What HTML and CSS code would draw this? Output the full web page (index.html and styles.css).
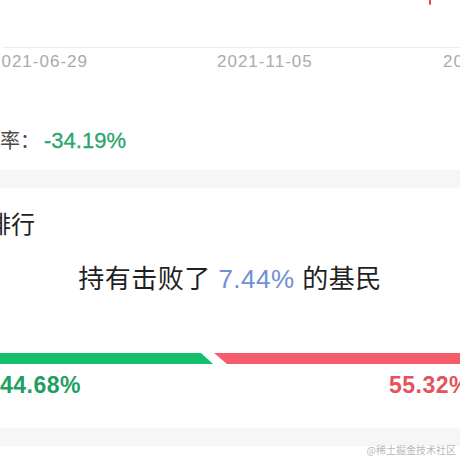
FILE: index.html
```html
<!DOCTYPE html>
<html lang="zh-CN">
<head>
<meta charset="utf-8">
<title>持有排行</title>
<link rel="stylesheet" href="styles.css">
</head>
<body>
<div class="page">
  <div class="chart">
    <span class="chart-mark"></span>
  </div>
  <div class="axis">
    <span class="date">2021-06-29</span>
    <span class="date">2021-11-05</span>
    <span class="date">2022-03-14</span>
  </div>
  <div class="yield">
    <span class="yield-label">收益率：</span><span class="yield-value">-34.19%</span>
  </div>
  <div class="band"></div>
  <div class="rank">
    <div class="rank-title">持有排行</div>
    <div class="rank-sentence">持有击败了 <span class="rank-pct">7.44%</span> 的基民</div>
    <div class="bars">
      <div class="bar bar-win"></div>
      <div class="bar bar-lose"></div>
    </div>
    <div class="pcts">
      <span class="pct pct-win">44.68%</span>
      <span class="pct pct-lose">55.32%</span>
    </div>
  </div>
  <div class="band"></div>
</div>
<div class="watermark">@稀土掘金技术社区</div>
</body>
</html>
```

FILE: styles.css
```css
html, body {
  margin: 0;
  padding: 0;
  background: #ffffff;
}
body {
  width: 460px;
  height: 460px;
  overflow: hidden;
  position: relative;
  font-family: "Liberation Sans", "Noto Sans CJK SC", sans-serif;
  color: #222222;
}
.page {
  width: 460px;
  overflow: hidden;
}
.chart {
  position: relative;
  height: 47px;
  margin-left: 3px;
  border-bottom: 1px solid #ececec;
}
.chart-mark {
  position: absolute;
  left: 426px;
  top: 0;
  width: 2px;
  height: 5px;
  background: #e8454f;
  border-radius: 0 0 1px 1px;
}
.axis {
  display: grid;
  grid-template-columns: repeat(3, 226px);
  margin-left: -9px;
  height: 26px;
  line-height: 27px;
  font-size: 17px;
  letter-spacing: 1px;
  color: #ababab;
  white-space: nowrap;
}
.yield {
  padding-top: 53px;
  padding-bottom: 15px;
  height: 28px;
  line-height: 28px;
  margin-left: -40px;
  white-space: nowrap;
}
.yield-label {
  font-size: 20px;
  color: #4a4a4a;
}
.yield-value {
  margin-left: 4px;
  font-size: 22px;
  color: #2aa56c;
  -webkit-text-stroke: 0.3px #2aa56c;
}
.band {
  height: 18px;
  background: #f6f6f6;
}
.rank {
  padding-top: 21px;
  padding-bottom: 29px;
}
.rank-title {
  margin-left: -61px;
  height: 32px;
  line-height: 32px;
  font-size: 24px;
  color: #222222;
  white-space: nowrap;
}
.rank-sentence {
  margin-top: 20px;
  height: 36px;
  line-height: 36px;
  font-size: 26px;
  letter-spacing: 0.5px;
  text-align: center;
  color: #1f1f24;
  white-space: nowrap;
}
.rank-pct {
  color: #6f8fd6;
}
.bars {
  display: flex;
  margin-top: 56px;
  height: 11px;
}
.bar {
  height: 11px;
}
.bar-win {
  width: 213px;
  background: #12bf6a;
  clip-path: polygon(0 0, calc(100% - 12px) 0, 100% 100%, 0 100%);
}
.bar-lose {
  flex: 1;
  margin-left: 1px;
  background: #f45d69;
  clip-path: polygon(0 0, 100% 0, 100% 100%, 13px 100%);
}
.pcts {
  display: flex;
  justify-content: space-between;
  margin-top: 7px;
  margin-right: -10px;
  height: 28px;
  line-height: 28px;
  font-size: 23px;
  font-weight: bold;
  letter-spacing: 0.5px;
  white-space: nowrap;
}
.pct-win {
  color: #1f9f62;
}
.pct-lose {
  color: #e4535d;
}
.watermark {
  position: absolute;
  right: 4px;
  bottom: 3px;
  font-family: "Noto Sans CJK SC", sans-serif;
  font-size: 10px;
  line-height: 14px;
  color: #b8b8b8;
}
```
